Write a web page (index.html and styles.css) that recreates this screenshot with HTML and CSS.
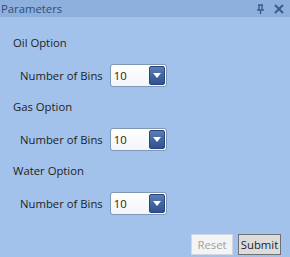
FILE: index.html
```html
<!DOCTYPE html>
<html>
<head>
<meta charset="utf-8">
<link rel="stylesheet" href="styles.css">
</head>
<body>
<div class="panel">
  <div class="header">
    <span class="title">Parameters</span>
    <span class="icons">
      <svg width="9" height="10" viewBox="0 0 9 10"><path d="M2 1h5M3 1v5M6 1v5M1 6h7M4.5 6v4" stroke="#3b5c8f" stroke-width="1.4" fill="none"/></svg>
      <svg width="10" height="10" viewBox="0 0 10 10"><path d="M1 1L9 9M9 1L1 9" stroke="#3b5c8f" stroke-width="2" fill="none"/></svg>
    </span>
  </div>
  <div class="content">
    <div class="group">
      <div class="label">Oil Option</div>
      <div class="row"><span class="rlabel">Number of Bins</span>
        <div class="combo"><span class="val">10</span><span class="btn"><svg width="8" height="5" viewBox="0 0 8 5"><path d="M0 0h8L4 5z" fill="#fff"/></svg></span></div>
      </div>
    </div>
    <div class="group">
      <div class="label">Gas Option</div>
      <div class="row"><span class="rlabel">Number of Bins</span>
        <div class="combo"><span class="val">10</span><span class="btn"><svg width="8" height="5" viewBox="0 0 8 5"><path d="M0 0h8L4 5z" fill="#fff"/></svg></span></div>
      </div>
    </div>
    <div class="group">
      <div class="label">Water Option</div>
      <div class="row"><span class="rlabel">Number of Bins</span>
        <div class="combo"><span class="val">10</span><span class="btn"><svg width="8" height="5" viewBox="0 0 8 5"><path d="M0 0h8L4 5z" fill="#fff"/></svg></span></div>
      </div>
    </div>
  </div>
  <div class="footer">
    <button class="b reset">Reset</button>
    <button class="b submit">Submit</button>
  </div>
</div>
</body>
</html>
```
FILE: styles.css
```css
html, body { margin: 0; padding: 0; }
body { width: 290px; height: 257px; background: #a3c2eb; font-family: "Open Sans", "Noto Sans", sans-serif; font-size: 11.3px; color: #1e1e1e; overflow: hidden; }
.panel { display: flex; flex-direction: column; height: 257px; }
.header { height: 17px; background: #8eb0dd; display: flex; align-items: center; justify-content: space-between; padding: 0 4px 0 1px; }
.title { color: #2f4d7c; line-height: 17px; }
.icons { display: flex; gap: 9px; align-items: center; padding-right: 2px; }
.content { flex: 1; padding: 18px 0 0 13px; display: flex; flex-direction: column; gap: 12px; }
.group { display: flex; flex-direction: column; gap: 13px; }
.label { line-height: 16px; }
.row { display: flex; align-items: center; padding-left: 7px; gap: 7px; }
.rlabel { line-height: 16px; }
.combo { width: 57px; height: 23px; box-sizing: border-box; border: 1px solid #8197b8; border-radius: 3px; background: linear-gradient(#ffffff, #f2f5fa); display: flex; align-items: center; justify-content: space-between; padding: 1px 1px 1px 3px; }
.val { color: #2a1a05; line-height: 16px; }
.btn { width: 16px; height: 19px; border-radius: 2px; background: linear-gradient(#5a7db5, #2e5290); border: 1px solid #2a4678; box-sizing: border-box; display: flex; align-items: center; justify-content: center; }
.footer { display: flex; justify-content: flex-end; gap: 5px; padding: 0 9px 2px 0; }
.b { font-family: inherit; font-size: 11.3px; height: 21px; padding: 0; margin: 0; border-radius: 0; }
.reset { color: #a0a0a0; background: #f4f4f4; border: 1px solid #d0d8e4; width: 42px; }
.submit { color: #1e1e1e; background: #dcdcdc; border: 1px solid #707070; width: 43px; }
```
